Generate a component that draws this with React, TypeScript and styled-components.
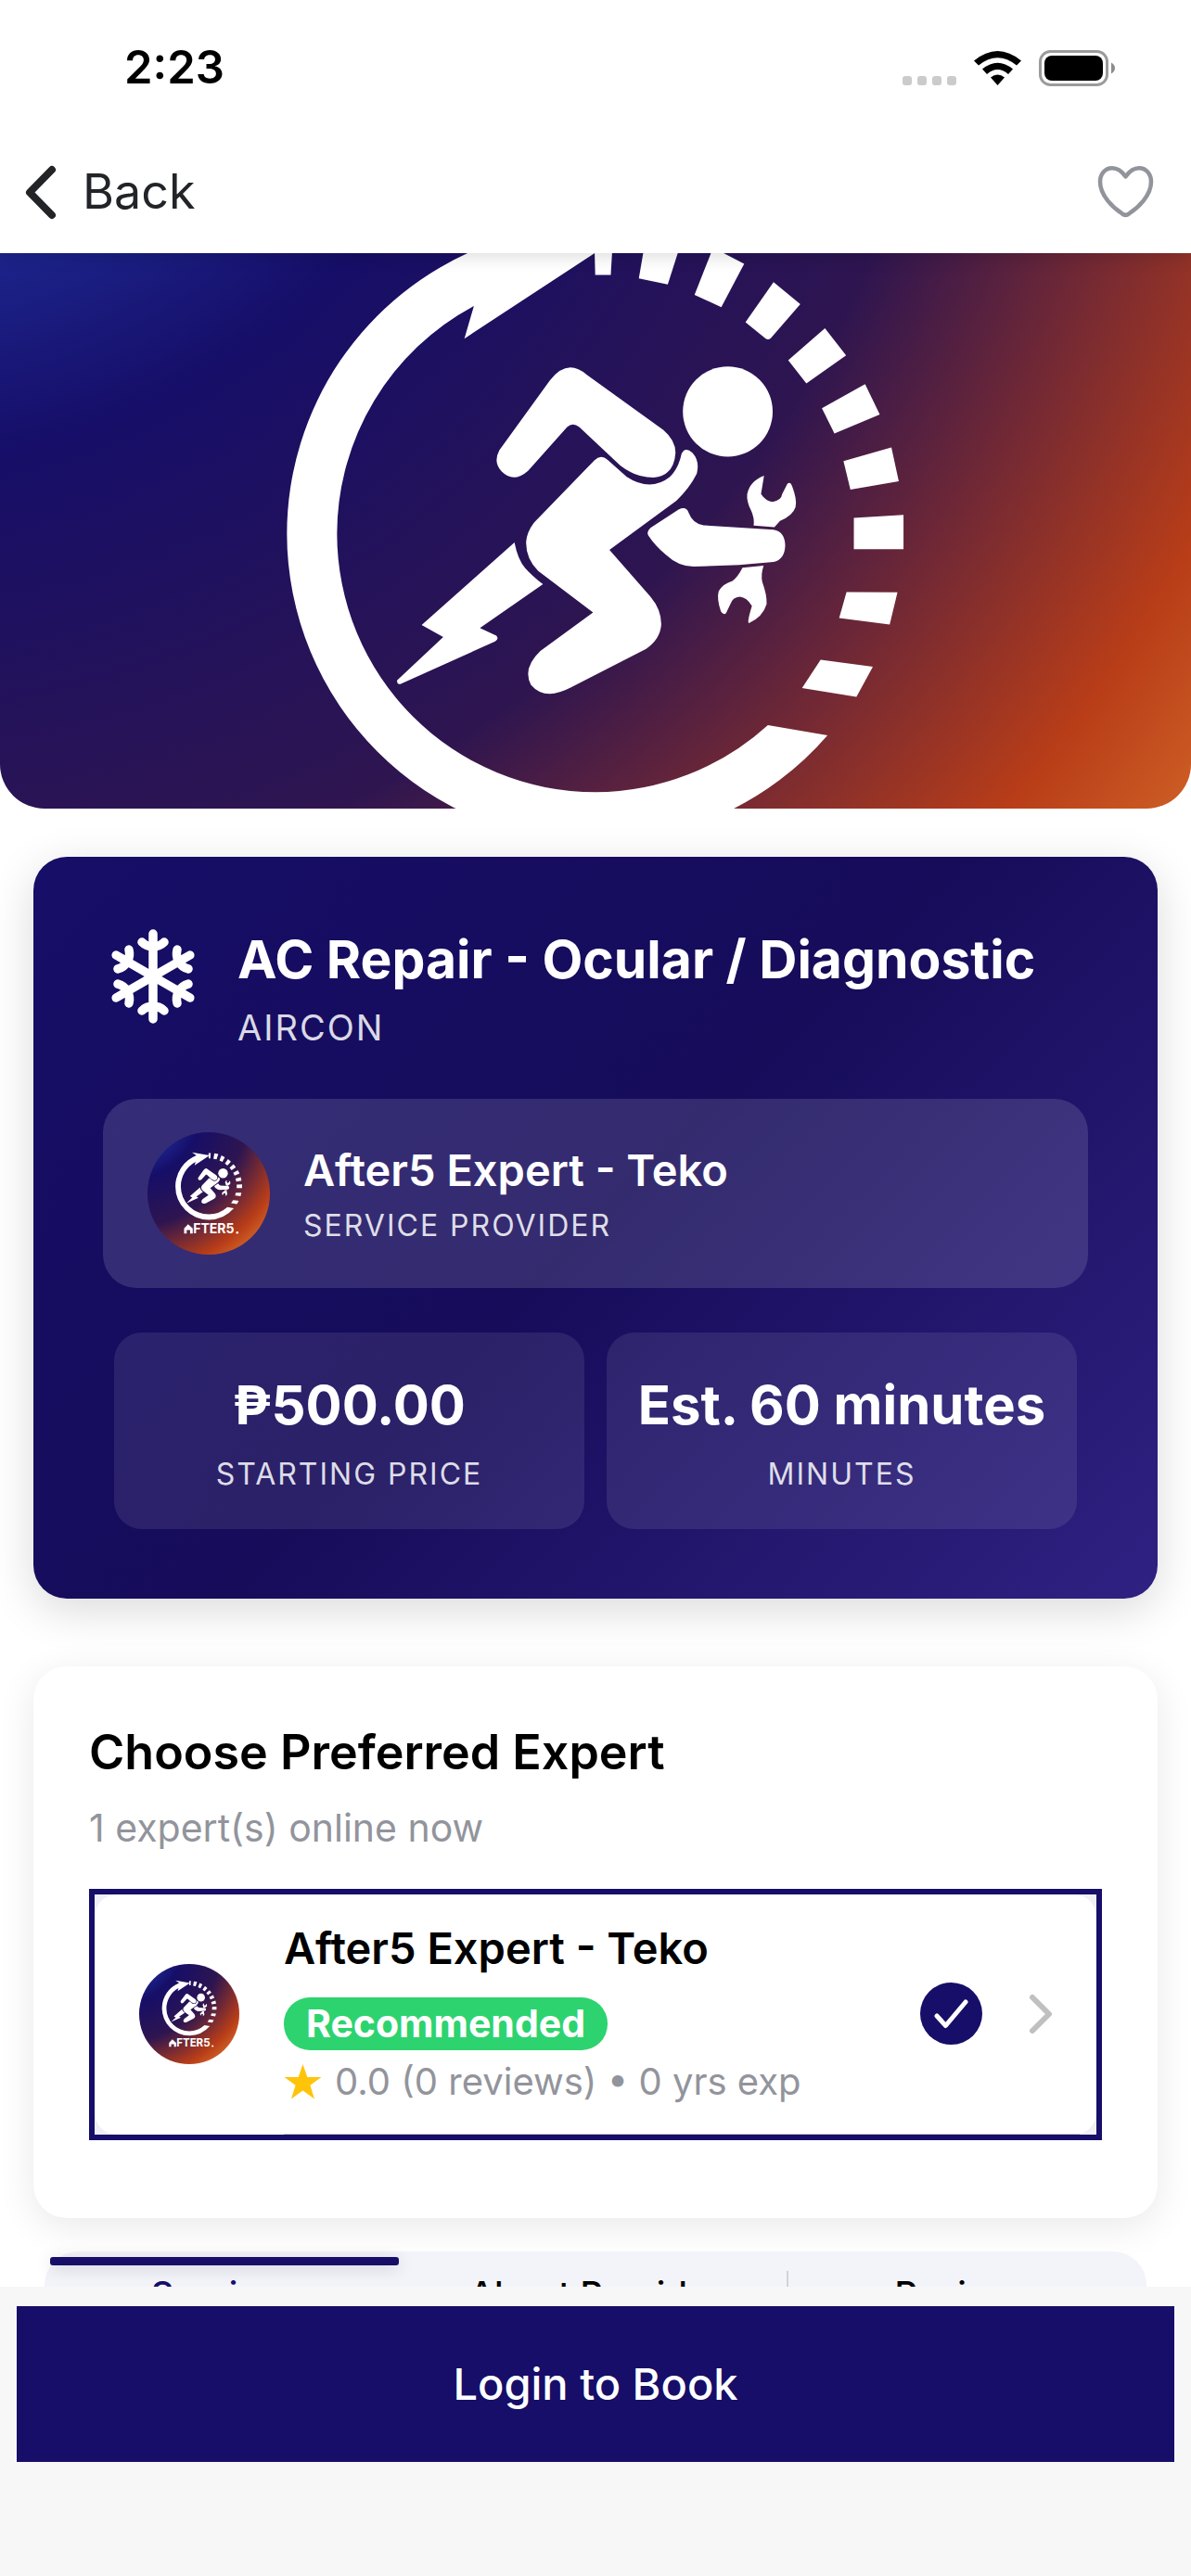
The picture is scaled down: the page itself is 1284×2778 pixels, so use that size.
import React, { useState } from "react";
import styled, { createGlobalStyle } from "styled-components";

const navy = "#160e68";
const grey = "#92949c";

const GlobalStyle = createGlobalStyle`
  *, *::before, *::after { box-sizing: border-box; }
  body { margin: 0; background: #fff; font-family: Inter, Roboto, "Liberation Sans", sans-serif; }
  button { font: inherit; color: inherit; background: none; border: 0; padding: 0; cursor: pointer; }
  h1, h2, p { margin: 0; }
  svg { display: block; flex-shrink: 0; }
`;

const Screen = styled.div`
  height: 100vh;
  display: flex;
  flex-direction: column;
  overflow: hidden;
`;

const Header = styled.header`
  position: relative;
  z-index: 1;
  flex-shrink: 0;
  background: #fff;
  box-shadow: 0 3px 18px rgba(0, 0, 0, 0.15);
`;

const StatusBar = styled.div`
  display: flex;
  align-items: center;
  justify-content: space-between;
  height: 144px;
  padding: 2px 81px 0 134px;
`;

const Clock = styled.span`
  font-size: 49px;
  line-height: 60px;
  font-weight: 600;
  color: #000;
`;

const StatusIcons = styled.div`
  display: flex;
  align-items: center;
`;

const Toolbar = styled.div`
  display: flex;
  align-items: center;
  justify-content: space-between;
  height: 129px;
  padding: 0 39px 4px 24px;
`;

const BackButton = styled.button`
  display: flex;
  align-items: center;
  gap: 25px;
  font-size: 52px;
  line-height: 60px;
  color: #222428;
`;

const Content = styled.main`
  flex: 1;
  min-height: 0;
  overflow: hidden;
`;

const Hero = styled.div`
  height: 599px;
  border-radius: 0 0 48px 48px;
  overflow: hidden;

  svg { width: 100%; height: 100%; }
`;

const Card = styled.section`
  margin: 0 36px;
  border-radius: 36px;
`;

const ServiceCard = styled(Card)`
  margin-top: 52px;
  padding: 75px;
  color: #fff;
  background: linear-gradient(135deg, #160e68 0%, #160c5a 50%, #2f2182 100%);
  box-shadow: 0 12px 48px rgba(0, 0, 0, 0.15);
`;

const ServiceHead = styled.div`
  display: flex;
  gap: 36px;
`;

const ServiceTitle = styled.h1`
  font-size: 57px;
  line-height: 72px;
  font-weight: 700;
`;

const Caption = styled.p<{ $size: number; $line: number }>`
  font-size: ${(p) => p.$size}px;
  line-height: ${(p) => p.$line}px;
  letter-spacing: 2px;
  text-transform: uppercase;
  color: rgba(255, 255, 255, 0.85);
`;

const ServiceText = styled.div`
  display: flex;
  flex-direction: column;
  gap: 12px;
`;

const Provider = styled.div`
  display: flex;
  align-items: center;
  gap: 36px;
  margin-top: 52px;
  padding: 36px 48px;
  border-radius: 36px;
  background: rgba(255, 255, 255, 0.13);
`;

const ProviderText = styled.div`
  display: flex;
  flex-direction: column;
  gap: 9px;
`;

const AvatarFrame = styled.div<{ $size: number }>`
  width: ${(p) => p.$size}px;
  height: ${(p) => p.$size}px;
  flex-shrink: 0;
  border-radius: 50%;
  overflow: hidden;

  svg { width: 100%; height: 100%; }
`;

const Name = styled.p`
  font-size: 47px;
  line-height: 60px;
  font-weight: 600;
`;

const Stats = styled.div`
  display: grid;
  grid-template-columns: 1fr 1fr;
  gap: 24px;
  margin-top: 48px;
  padding: 0 12px;
`;

const Stat = styled.div`
  display: flex;
  flex-direction: column;
  align-items: center;
  gap: 18px;
  padding: 42px 12px 38px;
  border-radius: 30px;
  background: rgba(255, 255, 255, 0.09);
`;

const StatValue = styled.p`
  font-size: 58px;
  line-height: 72px;
  font-weight: 700;
  white-space: nowrap;
`;

const ExpertCard = styled(Card)`
  margin-top: 73px;
  padding: 60px 60px 84px;
  background: #fff;
  box-shadow: 0 9px 42px rgba(0, 0, 0, 0.09);
`;

const SectionTitle = styled.h2`
  font-size: 52px;
  line-height: 66px;
  font-weight: 600;
  color: #000;
`;

const Online = styled.p`
  margin-top: 21px;
  font-size: 41px;
  line-height: 54px;
  color: ${grey};
`;

const ExpertList = styled.div`
  margin-top: 39px;
  border: 6px solid ${navy};
  background: #f0eff6;
`;

const ExpertRow = styled.button`
  position: relative;
  display: flex;
  align-items: center;
  gap: 48px;
  width: 100%;
  padding: 0 45px 2px 48px;
  border-radius: 24px;
  background: #fff;
  text-align: left;
  color: #000;

  &::after {
    content: "";
    position: absolute;
    left: 204px;
    right: 18px;
    bottom: 0;
    height: 1px;
    background: #c8c7cc;
  }
`;

const ExpertText = styled.div`
  display: flex;
  flex-direction: column;
  align-items: flex-start;
  flex: 1;
  padding: 28px 0;
`;

const Badge = styled.span`
  margin: 23px 0 7px;
  padding: 0 24px;
  border-radius: 28px;
  background: #2dd36f;
  color: #fff;
  font-size: 41px;
  line-height: 57px;
  font-weight: 700;
`;

const Rating = styled.span`
  display: flex;
  align-items: center;
  gap: 14px;
  font-size: 40px;
  line-height: 54px;
  color: ${grey};
`;

const Tabs = styled.div`
  display: grid;
  grid-template-columns: repeat(3, 1fr);
  gap: 24px;
  margin: 36px 48px 0;
  padding: 6px 6px 24px;
  border-radius: 36px;
  background: #f3f4f9;
`;

const Tab = styled.button<{ $active: boolean }>`
  display: flex;
  flex-direction: column;
  gap: 6px;
  font-size: 38px;
  line-height: 48px;
  font-weight: 500;
  color: ${(p) => (p.$active ? navy : "#000")};

  &::before {
    content: "";
    align-self: stretch;
    height: 9px;
    border-radius: 3px;
    background: ${(p) => (p.$active ? navy : "transparent")};
    box-shadow: ${(p) => (p.$active ? "0 3px 18px rgba(0, 0, 0, 0.16)" : "none")};
  }
`;

const TabLabel = styled.span<{ $divided: boolean }>`
  align-self: stretch;
  margin-left: ${(p) => (p.$divided ? "-6px" : "0")};
  padding-top: 1px;
  text-align: center;
  border-left: ${(p) => (p.$divided ? "2px solid #d2d3d8" : "0")};
`;

const Footer = styled.footer`
  position: relative;
  flex-shrink: 0;
  padding: 21px 18px 123px;
  background: #f7f7f7;
`;

const BookButton = styled.button`
  display: block;
  width: 100%;
  padding: 54px 0;
  background: ${navy};
  color: #fff;
  font-size: 47px;
  line-height: 60px;
  font-weight: 500;
`;

/* Brand drawing: the running technician inside a stopwatch ring. */
function Runner() {
  return (
    <g transform="translate(280 260) scale(0.4655 0.3954)" fill="#fff">
      <path d="M1315 1348A715 842 0 0 1 778 1639A715 842 0 0 1 63 797A715 842 0 0 1 513 17L419 -61L795 18L474 266L496 177A599 706 0 0 0 179 797A599 706 0 0 0 778 1503A599 706 0 0 0 1177 1320Z" />
      <path d="M774 -45H820L813 92H777Z" />
      <path d="M898 -35L982 -18L945 118L878 102Z" />
      <path d="M1050 18L1122 62L1069 180L1007 147Z" />
      <path d="M1190 112L1252 172L1184 264Q1178 271 1172 266L1125 221Z" />
      <path d="M1309 238L1358 312L1266 388L1224 325Z" />
      <path d="M1402 390L1436 473L1331 525L1302 456Z" />
      <path d="M1463 563L1480 655L1368 678L1352 600Z" />
      <path d="M1491 747V840H1376V755Z" />
      <path d="M1359 957L1477 958L1459 1046L1342 1028Z" />
      <path d="M1299 1142L1420 1161L1382 1243L1256 1219Z" />
      <ellipse cx="1084" cy="465" rx="104" ry="123" />
      <path d="M555 570L672 380Q712 318 757 364L935 515Q963 543 963 577Q960 640 912 645Q870 645 835 612L740 507Q725 493 712 507L622 626Q588 662 560 628Q540 603 555 570Z" />
      <path d="M775 598Q790 580 806 597L850 643Q905 685 950 643Q970 620 977 580Q985 560 1002 577Q1020 600 1012 635Q995 675 965 708L810 842L905 970Q930 1005 930 1045Q928 1085 895 1112L720 1218Q660 1255 628 1210Q608 1165 650 1118L772 1013L645 900Q616 865 617 820Q618 795 635 768Z" />
      <path d="M590 822Q598 870 615 892Q630 912 656 936L510 1055L548 1076Q555 1085 545 1092L328 1207Q318 1212 318 1198L425 1080L375 1047Z" />
      <path d="M970 732Q988 722 993 740Q1003 772 1028 775L1190 787Q1216 792 1217 830Q1216 868 1190 875L1110 883L1005 888Q970 888 940 855Q915 830 900 803Q895 793 905 782Z" />
      <path d="M1168 640L1161 690Q1172 710 1188 711Q1208 708 1210 690L1222 662Q1229 655 1233 668Q1245 705 1241 725Q1235 748 1205 763L1192 780L1144 776Q1146 755 1138 735Q1127 710 1129 690Q1135 655 1168 640Z" />
      <path d="M1118 891L1167 885Q1160 910 1164 930Q1175 965 1174 990Q1165 1025 1133 1042Q1128 1040 1140 995Q1128 972 1112 970Q1095 972 1090 990L1080 1015Q1074 1022 1068 1010Q1058 975 1063 955Q1072 935 1095 927Q1108 915 1118 891Z" />
    </g>
  );
}

function BrandArt({ id, viewBox, wordmark }: { id: string; viewBox: string; wordmark?: boolean }) {
  return (
    <svg viewBox={viewBox} preserveAspectRatio="xMidYMid slice" role="img" aria-label="After5">
      <defs>
        <radialGradient id={id} gradientUnits="userSpaceOnUse" cx="-141" cy="-200" r="1800">
          <stop offset="0.27" stopColor="#1c248c" />
          <stop offset="0.391" stopColor="#160e68" />
          <stop offset="0.656" stopColor="#2e1550" />
          <stop offset="0.904" stopColor="#b83d18" />
          <stop offset="1" stopColor="#d06226" />
        </radialGradient>
      </defs>
      <rect x="0" y="0" width="1284" height="1284" fill={`url(#${id})`} />
      <Runner />
      {wordmark && (
        <g fill="#fff">
          <path d="M396 1045V995L436 954L482 995V1045H456V1012H422V1045Z" />
          <text x="486" y="1046" fontFamily="Inter, sans-serif" fontWeight="700" fontSize="130">
            FTER5
          </text>
          <circle cx="926" cy="1036" r="12" />
        </g>
      )}
    </svg>
  );
}

function Avatar({ id, size }: { id: string; size: number }) {
  return (
    <AvatarFrame $size={size}>
      <BrandArt id={id} viewBox="31 35 1221 1221" wordmark />
    </AvatarFrame>
  );
}

function PhoneIcons() {
  return (
    <svg width="230" height="42" viewBox="973 51 230 42" aria-hidden="true">
      {[973, 989, 1005, 1021].map((x) => (
        <rect key={x} x={x} y="81" width="10" height="10" rx="3" fill="#cbcbcb" />
      ))}
      <path d="M1050 64.500Q1075.500 43.500 1101 64.500L1096 69.500Q1075.500 53 1055 69.500Z" />
      <path d="M1059 73.500Q1075.500 60 1092 73.500L1087 79Q1075.500 69 1064 79Z" />
      <path d="M1068 82.500Q1075.500 76.500 1083 82.500L1075.500 91Z" />
      <rect x="1121.500" y="54.500" width="72" height="36" rx="11" fill="none" stroke="#9b9b9b" strokeWidth="3" />
      <rect x="1126" y="59" width="63" height="27" rx="8" />
      <path d="M1198 66.500Q1202 69 1202 72.500Q1202 76 1198 78.500Z" fill="#8c8c8c" />
    </svg>
  );
}

function Snowflake() {
  return (
    <svg width="109" height="108" viewBox="-54 -54 109 108" fill="none" stroke="#fff" strokeWidth="9.500" strokeLinecap="round" aria-hidden="true">
      {[0, 60, 120, 180, 240, 300].map((a) => (
        <path key={a} transform={`rotate(${a})`} d="M0 0V-46M-12 -37Q-7 -32 0 -32Q7 -32 12 -37" />
      ))}
    </svg>
  );
}

const tabs = ["Services", "About Provider", "Reviews"];

export default function App() {
  const [active, setActive] = useState(0);
  return (
    <Screen>
      <GlobalStyle />
      <Header>
        <StatusBar>
          <Clock>2:23</Clock>
          <StatusIcons>
            <PhoneIcons />
          </StatusIcons>
        </StatusBar>
        <Toolbar>
          <BackButton type="button">
            <svg width="40" height="60" viewBox="0 0 40 60" fill="none" stroke="#222428" strokeWidth="8" strokeLinecap="round" strokeLinejoin="round" aria-hidden="true">
              <path d="M32 6L8 30.500L32 55" />
            </svg>
            Back
          </BackButton>
          <button type="button" aria-label="Add to favourites">
            <svg width="63" height="58" viewBox="1182 179 63 58" fill="none" stroke={grey} strokeWidth="4.500" strokeLinejoin="round">
              <path d="M1213.500 191.500C1209 185 1204 182.200 1199 182.200C1191 182.200 1186 189 1186 197C1186 212 1200 225 1209.500 231.200Q1213.500 234.500 1217.500 231.200C1227 225 1241 212 1241 197C1241 189 1236 182.200 1228 182.200C1223 182.200 1218 185 1213.500 191.500Z" />
            </svg>
          </button>
        </Toolbar>
      </Header>

      <Content>
        <Hero>
          <BrandArt id="hero" viewBox="0 273 1284 599" />
        </Hero>

        <ServiceCard>
          <ServiceHead>
            <Snowflake />
            <ServiceText>
              <ServiceTitle>AC Repair - Ocular / Diagnostic</ServiceTitle>
              <Caption $size={38} $line={50}>Aircon</Caption>
            </ServiceText>
          </ServiceHead>
          <Provider>
            <Avatar id="provider" size={132} />
            <ProviderText>
              <Name>After5 Expert - Teko</Name>
              <Caption $size={32} $line={42}>Service Provider</Caption>
            </ProviderText>
          </Provider>
          <Stats>
            <Stat>
              <StatValue>₱500.00</StatValue>
              <Caption $size={32} $line={42}>Starting Price</Caption>
            </Stat>
            <Stat>
              <StatValue>Est. 60 minutes</StatValue>
              <Caption $size={32} $line={42}>Minutes</Caption>
            </Stat>
          </Stats>
        </ServiceCard>

        <ExpertCard>
          <SectionTitle>Choose Preferred Expert</SectionTitle>
          <Online>1 expert(s) online now</Online>
          <ExpertList>
            <ExpertRow type="button">
              <Avatar id="expert" size={108} />
              <ExpertText>
                <Name>After5 Expert - Teko</Name>
                <Badge>Recommended</Badge>
                <Rating>
                  <svg width="41" height="38" viewBox="0 0 41 38" fill="#ffc409" aria-hidden="true">
                    <path d="M20.500 0L25.300 14H40.500L28.400 22.800L33 37.500L20.500 28.500L8 37.500L12.600 22.800L.5 14H15.700Z" />
                  </svg>
                  0.0 (0 reviews) • 0 yrs exp
                </Rating>
              </ExpertText>
              <svg width="67" height="67" viewBox="0 0 67 67" fill="none" aria-hidden="true">
                <circle cx="33.500" cy="33.500" r="33.500" fill={navy} />
                <path d="M18 36L27.500 46.500L49 21" stroke="#fff" strokeWidth="5" strokeLinecap="round" strokeLinejoin="round" />
              </svg>
              <svg width="30" height="44" viewBox="0 0 30 44" fill="none" stroke="#c0c0c0" strokeWidth="6" strokeLinecap="round" strokeLinejoin="round" aria-hidden="true">
                <path d="M6 4L24 22L6 40" />
              </svg>
            </ExpertRow>
          </ExpertList>
        </ExpertCard>

        <Tabs role="tablist">
          {tabs.map((label, i) => (
            <Tab key={label} type="button" role="tab" aria-selected={i === active} $active={i === active} onClick={() => setActive(i)}>
              <TabLabel $divided={i === 2}>{label}</TabLabel>
            </Tab>
          ))}
        </Tabs>
      </Content>

      <Footer>
        <BookButton type="button">Login to Book</BookButton>
      </Footer>
    </Screen>
  );
}
